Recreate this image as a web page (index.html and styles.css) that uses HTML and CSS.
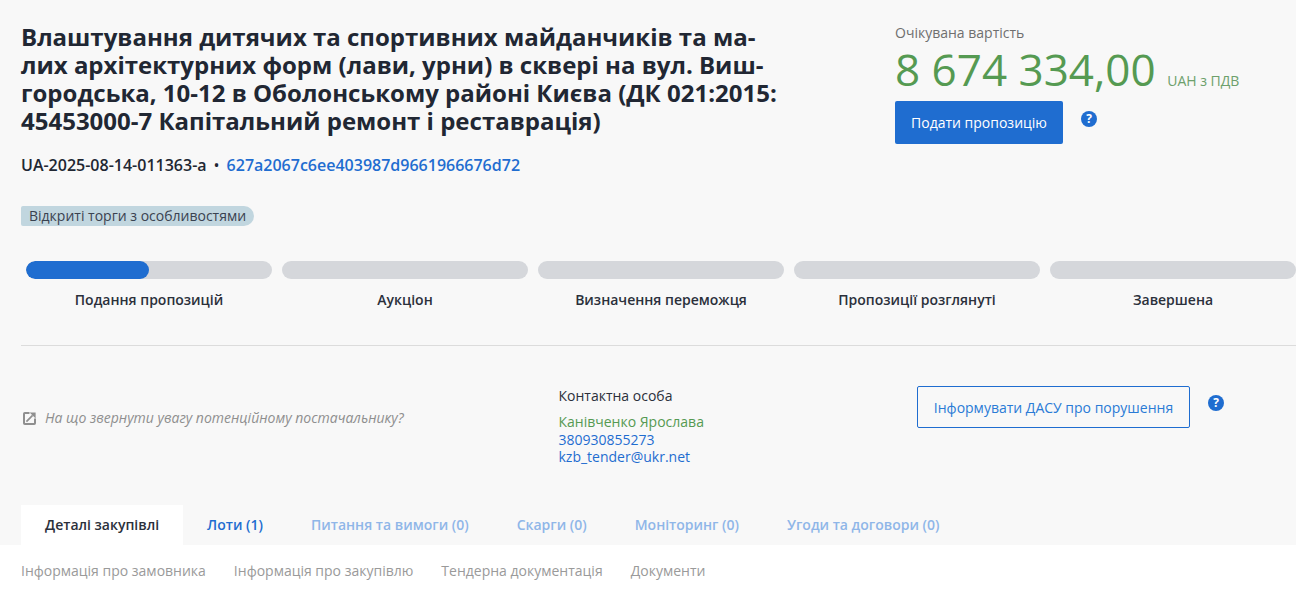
FILE: index.html
```html
<!DOCTYPE html>
<html lang="uk">
<head>
<meta charset="utf-8">
<title>Тендер</title>
<link rel="stylesheet" href="styles.css">
</head>
<body>
<main class="top">
  <header class="head">
    <div class="head-left">
      <h1 class="title">Влаштування дитячих та спортивних майданчиків та ма-<br>лих архітектурних форм (лави, урни) в сквері на вул. Виш-<br>городська, 10-12 в Оболонському районі Києва (ДК 021:2015:<br>45453000-7 Капітальний ремонт і реставрація)</h1>
      <div class="ids"><span>UA-2025-08-14-011363-a</span><span class="dot">•</span><a class="hash">627a2067c6ee403987d9661966676d72</a></div>
      <div class="badge">Відкриті торги з особливостями</div>
    </div>
    <div class="head-right">
      <div class="price-label">Очікувана вартість</div>
      <div class="price"><span class="amount">8 674 334,00</span><span class="currency">UAH з ПДВ</span></div>
      <div class="cta"><button class="btn-primary">Подати пропозицію</button>
        <svg class="help help-cta" viewBox="0 0 16 16"><circle cx="8" cy="8" r="8" fill="#1f6dd0"/><text x="8" y="12" text-anchor="middle" class="help-mark">?</text></svg>
      </div>
    </div>
  </header>

  <section class="steps">
    <div class="step"><div class="bar"><div class="fill"></div></div><div class="step-name">Подання пропозицій</div></div>
    <div class="step"><div class="bar"></div><div class="step-name">Аукціон</div></div>
    <div class="step"><div class="bar"></div><div class="step-name">Визначення переможця</div></div>
    <div class="step"><div class="bar"></div><div class="step-name">Пропозиції розглянуті</div></div>
    <div class="step"><div class="bar"></div><div class="step-name">Завершена</div></div>
  </section>

  <hr class="rule">

  <section class="info">
    <div class="hint">
      <svg class="ext" viewBox="0 0 13 13"><path d="M6.5 1H1.8a.8.8 0 0 0-.8.8v9.4a.8.8 0 0 0 .8.8h9.4a.8.8 0 0 0 .8-.8V6.5" fill="none" stroke="#8f8f8f" stroke-width="2"/><path d="M3.4 9.6 9.6 3.4" stroke="#8f8f8f" stroke-width="1.7" fill="none"/><path d="M6.6 .4h6v6z" fill="#8f8f8f"/></svg>
      <em>На що звернути увагу потенційному постачальнику?</em>
    </div>
    <div class="contact">
      <div class="contact-title">Контактна особа</div>
      <div class="contact-name">Канівченко Ярослава</div>
      <a class="contact-link">380930855273</a>
      <a class="contact-link">kzb_tender@ukr.net</a>
    </div>
    <div class="dasu">
      <button class="btn-outline">Інформувати ДАСУ про порушення</button>
      <svg class="help help-dasu" viewBox="0 0 16 16"><circle cx="8" cy="8" r="8" fill="#1f6dd0"/><text x="8" y="12" text-anchor="middle" class="help-mark">?</text></svg>
    </div>
  </section>

  <nav class="tabs">
    <a class="tab active">Деталі закупівлі</a>
    <a class="tab link">Лоти (1)</a>
    <a class="tab muted">Питання та вимоги (0)</a>
    <a class="tab muted">Скарги (0)</a>
    <a class="tab muted">Моніторинг (0)</a>
    <a class="tab muted">Угоди та договори (0)</a>
  </nav>
</main>
<nav class="subnav">
  <a>Інформація про замовника</a>
  <a>Інформація про закупівлю</a>
  <a>Тендерна документація</a>
  <a>Документи</a>
</nav>
</body>
</html>
```
FILE: styles.css
```css
* { box-sizing: border-box; }
html, body { margin: 0; height: 100%; overflow: hidden; }
body { background: #fff; font-family: "Open Sans", sans-serif; color: #212733; font-size: 14px; }
.top { background: #f8f8f8; padding-left: 21px; height: 545px; overflow: hidden; }
.head { display: flex; height: 205px; padding-top: 23px; }
.head-left { width: 874px; flex: none; }
.title { margin: 0; font-size: 24px; line-height: 28px; font-weight: 700; color: #212733; white-space: nowrap; }
.ids { margin-top: 18px; font-size: 16px; line-height: 24px; font-weight: 600; display: flex; white-space: nowrap; }
.dot { margin: 0 7px; font-weight: 400; }
.hash { color: #1f6dd0; }
.badge { margin-top: 29px; display: inline-block; background: #c1d6df; border-radius: 2px 10px 10px 2px; font-size: 14px; line-height: 20px; padding: 0 8px; color: #3a4250; white-space: nowrap; }
.head-right { flex: none; }
.price-label { font-size: 14px; line-height: 20px; color: #6f6f6f; }
.price { display: flex; align-items: baseline; white-space: nowrap; color: #559a52; line-height: 52px; height: 50px; }
.amount { font-size: 44px; }
.currency { font-size: 14px; margin-left: 11.5px; color: #6da06b; }
.cta { display: flex; align-items: flex-start; margin-top: 8px; }
.btn-primary { width: 168px; height: 43px; background: #1f6dd0; border: 0; border-radius: 2px; color: #fff; font: 14px "Open Sans", sans-serif; padding: 0; }
.help { width: 16px; height: 16px; flex: none; }
.help-cta { margin: 10px 0 0 18px; }
.help-mark { font: 700 12px "Open Sans", sans-serif; fill: #fff; }
.steps { display: flex; gap: 10px; margin-left: 5px; width: 1270px; padding-top: 56px; }
.step { flex: 1 1 0; }
.bar { height: 18px; border-radius: 9px; background: #d5d7db; overflow: hidden; }
.fill { width: 50%; height: 100%; background: #1f6dd0; border-radius: 9px; }
.step-name { margin-top: 11px; text-align: center; font-size: 14px; line-height: 20px; font-weight: 600; color: #2b303b; white-space: nowrap; }
.rule { margin: 35px 0 0; border: 0; border-top: 1px solid #dcdcdc; }
.info { display: flex; height: 159px; }
.hint { width: 537.5px; flex: none; padding-top: 62px; font-size: 14px; line-height: 20px; color: #8f8f8f; display: flex; align-items: flex-start; gap: 9px; }
.ext { width: 13px; height: 13px; margin-top: 4px; margin-left: 2px; flex: none; }
.contact { width: 358.5px; flex: none; padding-top: 40px; display: flex; flex-direction: column; font-size: 14px; line-height: 17.5px; }
.contact-title { color: #2b303b; line-height: 20px; margin-bottom: 7px; }
.contact-name { color: #559a52; }
.contact-link { color: #1f6dd0; }
.dasu { display: flex; align-items: flex-start; padding-top: 40px; }
.btn-outline { width: 273px; height: 42px; background: transparent; border: 1px solid #1f6dd0; border-radius: 2px; color: #2a7bd6; font: 14px "Open Sans", sans-serif; padding: 0; }
.help-dasu { margin: 9px 0 0 18px; }
.tabs { display: flex; height: 40px; }
.tab { padding: 0 24px; height: 40px; font-size: 14px; line-height: 40px; font-weight: 600; white-space: nowrap; }
.active { background: #fff; color: #2b303b; }
.link { color: #1f6dd0; }
.muted { color: #8fb6e8; }
.subnav { display: flex; gap: 28px; padding: 16px 0 0 21px; font-size: 14px; line-height: 20px; color: #9a9a9a; white-space: nowrap; }
```
